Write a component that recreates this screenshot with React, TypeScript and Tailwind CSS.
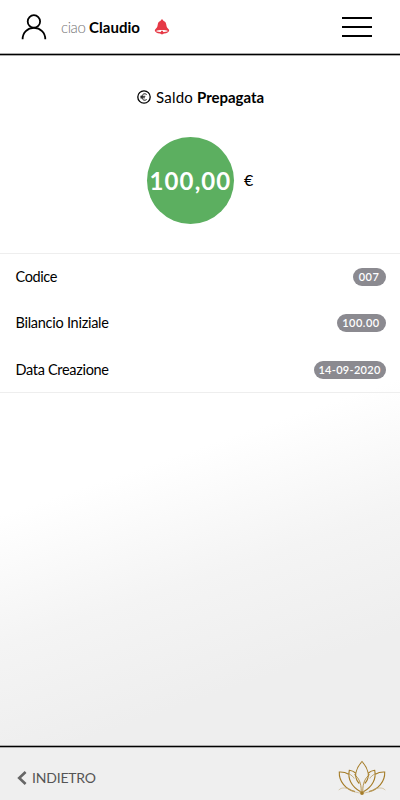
function UserIcon() {
  return (
    <svg width="26" height="26" viewBox="0 0 26 26" fill="none" stroke="#000" strokeWidth="1.8">
      <circle cx="12.9" cy="7.4" r="6.2" />
      <path d="M1.6 25.2C1.6 18.5 6.4 13.9 12.9 13.9S24.3 18.5 24.3 25.2" />
    </svg>
  );
}

function BellIcon() {
  return (
    <svg width="16" height="16" viewBox="0 0 16 16">
      <path
        d="M8 .5C8.8 .5 9.2 1 9.3 1.7C11.4 2.3 12.1 4 12.3 5.8C12.5 8 13.4 9.2 14.6 10.2C15.3 10.8 15.3 11.8 14.7 12.4C13.8 13.9 11 14.6 8 14.6S2.2 13.9 1.3 12.4C.7 11.8.7 10.8 1.4 10.2C2.6 9.2 3.5 8 3.7 5.8C3.9 4 4.6 2.3 6.7 1.7C6.8 1 7.2.5 8 .5Z"
        fill="#e63946"
      />
      <path d="M2 12.1C4.3 10.7 11.7 10.7 14 12.1C12.4 13.6 3.6 13.6 2 12.1Z" fill="#fff" />
      <path d="M7.3 11.7H8.7L9.4 13.3A1.5 1.5 0 1 1 6.6 13.3Z" fill="#e63946" />
    </svg>
  );
}

function EuroIcon() {
  return (
    <svg width="14" height="14" viewBox="0 0 14 14" fill="none" stroke="#000" strokeWidth="1.3">
      <circle cx="7" cy="7" r="6.2" />
      <path d="M9.7 4.5C7.2 2.8 4.9 4.4 4.9 7S7.2 11.2 9.7 9.5M3.3 6.3H8.3M3.3 7.8H7.9" strokeWidth="0.9" />
    </svg>
  );
}

function LotusIcon() {
  return (
    <svg width="48" height="36" viewBox="0 0 48 36" fill="none" stroke="#a57c27" strokeWidth="1.1">
      <path d="M21.3 23.5C18.5 20.5 17.2 17 17.8 13C18.6 8.5 21.3 4.5 24 1.5C26.7 4.5 29.4 8.5 30.2 13C30.8 17 29.5 20.5 26.7 23.5" />
      <path d="M17.6 13C15.6 11.3 13.5 10.5 11.3 10.3C9.5 18.5 13.5 27 22.6 31.8" />
      <path d="M30.4 13C32.4 11.3 34.5 10.5 36.7 10.3C38.5 18.5 34.5 27 25.4 31.8" />
      <path d="M16.2 14.5C20.8 17.5 23.4 23.5 23.2 31M31.8 14.5C27.2 17.5 24.6 23.5 24.8 31" strokeWidth=".8" />
      <path d="M10.7 14.3C8 12.6 4.8 11.8 1.3 12C.8 21.5 8 29.8 17 31.6M37.3 14.3C40 12.6 43.2 11.8 46.7 12C47.2 21.5 40 29.8 31 31.6" />
      <path d="M10.5 13.5C14 15.5 15.5 17 16.2 18.5M37.5 13.5C34 15.5 32.5 17 31.8 18.5" strokeWidth=".6" />
      <path d="M.7 30.2C3 26.8 10 27.7 13 30.2C16 32 20 32.8 23 33M47.3 30.2C45 26.8 38 27.7 35 30.2C32 32 28 32.8 25 33" strokeWidth=".65" stroke="#c4ad7e" />
      <circle cx="24" cy="33" r="1.9" fill="#a57c27" stroke="none" />
    </svg>
  );
}

const rows = [
  { label: "Codice", value: "007", width: "w-[33px]", tracking: "tracking-[0.5px]", labelTracking: "tracking-[-0.4px]" },
  { label: "Bilancio Iniziale", value: "100.00", width: "w-[49px]", tracking: "tracking-[0.5px]", labelTracking: "tracking-[-0.26px]" },
  { label: "Data Creazione", value: "14-09-2020", width: "w-[72px]", tracking: "tracking-[0.3px]", labelTracking: "tracking-[-0.31px]" },
];

export default function App() {
  return (
    <div className="flex h-[800px] w-[400px] flex-col overflow-hidden whitespace-nowrap bg-[linear-gradient(161deg,#fff_0%,#fff_55%,#f4f4f4_69%,#eee_82%,#eee_100%)] font-['Lato',sans-serif] text-black">
      <header className="flex h-[53px] shrink-0 items-center bg-white pr-[28px] pl-[21px]">
        <UserIcon />
        <p className="ml-[14px] flex items-center gap-1 text-[15px] leading-5">
          <span className="w-[24px] font-light tracking-[-0.4px] text-[#777]">ciao</span>
          <span className="w-[52px] font-bold tracking-[0.05px]">Claudio</span>
        </p>
        <div className="ml-[13px] pt-px">
          <BellIcon />
        </div>
        <button className="ml-auto flex w-[30px] flex-col gap-[7px]" aria-label="Menu">
          <span className="h-[2px] w-full bg-black" />
          <span className="h-[2px] w-full bg-black" />
          <span className="h-[2px] w-full bg-black" />
        </button>
      </header>
      <div className="h-[3px] shrink-0 border-y border-[#aaa] bg-black" />
      <section className="h-[197px] shrink-0 bg-white pt-[31px]">
        <h1 className="flex h-5 items-center pl-[137px] text-[15px]">
          <EuroIcon />
          <span className="ml-[5px] w-[41px] tracking-[0.2px]">Saldo</span>
          <span className="font-bold tracking-[-0.03px]">Prepagata</span>
        </h1>
        <div className="mt-[30px] flex items-center pl-[147px]">
          <div className="flex size-[87px] items-center justify-center rounded-full bg-[#5caf60] text-[24px] font-bold tracking-[1.1px] text-white">
            100,00
          </div>
          <span className="-mt-px ml-[10px] text-[16px]">€</span>
        </div>
      </section>
      <ul className="h-[140px] shrink-0 border-y border-[#eee]">
        {rows.map((row) => (
          <li key={row.label} className="flex h-[46.5px] items-center justify-between pr-[14.5px] pl-[15.5px]">
            <span className={`-mt-px text-[14.5px] ${row.labelTracking}`}>{row.label}</span>
            <span className={`-mt-px flex h-[18px] items-center justify-center rounded-full bg-[#8b8a90] text-[11px] font-semibold text-white ${row.width} ${row.tracking}`}>
              {row.value}
            </span>
          </li>
        ))}
      </ul>
      <main className="flex-1" />
      <div className="h-[3px] shrink-0 border-y border-[#aaa] bg-black" />
      <footer className="flex h-[52px] shrink-0 items-center justify-between bg-[#efefef] pr-[14px] pl-[17px]">
        <a className="flex items-center gap-[5px] pt-[8px] text-[14px] tracking-[-0.2px] text-[#555]">
          <svg width="10" height="14" viewBox="0 0 10 14" fill="none" stroke="#666" strokeWidth="2.6">
            <path d="M8.6 1L2.2 7L8.6 13" />
          </svg>
          <span className="-mt-[2px]">INDIETRO</span>
        </a>
        <div className="pt-[7px]">
          <LotusIcon />
        </div>
      </footer>
    </div>
  );
}
